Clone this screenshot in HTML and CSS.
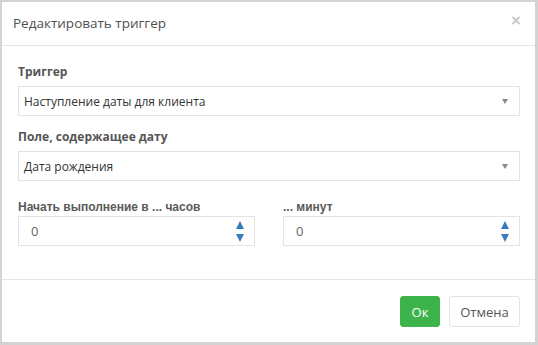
FILE: index.html
```html
<!DOCTYPE html>
<html>
<head>
<meta charset="utf-8">
<link rel="stylesheet" href="styles.css">
</head>
<body>
<div class="dialog">
  <div class="header">
    <span class="title">Редактировать триггер</span>
    <span class="close">×</span>
  </div>
  <div class="body">
    <div class="field">
      <div class="label">Триггер</div>
      <div class="select"><span>Наступление даты для клиента</span><span class="caret"></span></div>
    </div>
    <div class="field">
      <div class="label">Поле, содержащее дату</div>
      <div class="select"><span>Дата рождения</span><span class="caret"></span></div>
    </div>
    <div class="row">
      <div class="field col">
        <div class="label alt">Начать выполнение в ... часов</div>
        <div class="number"><span>0</span>
          <span class="spin"><span class="up"></span><span class="down"></span></span>
        </div>
      </div>
      <div class="field col">
        <div class="label alt">... минут</div>
        <div class="number"><span>0</span>
          <span class="spin"><span class="up"></span><span class="down"></span></span>
        </div>
      </div>
    </div>
  </div>
  <div class="footer">
    <button class="btn ok">Ок</button>
    <button class="btn cancel">Отмена</button>
  </div>
</div>
</body>
</html>
```

FILE: styles.css
```css
html, body {
  margin: 0;
  padding: 0;
}
body {
  background: #d3d3d3;
  width: 538px;
  height: 345px;
  padding: 2px 3px 3px 2px;
  box-sizing: border-box;
  font-family: "Open Sans", "Liberation Sans", sans-serif;
}
.dialog {
  background: #fff;
  height: 340px;
  display: flex;
  flex-direction: column;
}
.header {
  height: 43px;
  border-bottom: 1px solid #e5e5e5;
  display: flex;
  align-items: center;
  justify-content: space-between;
  padding: 0 14px 0 11px;
}
.title {
  font-size: 13.5px;
  color: #505050;
  margin-top: -2px;
}
.close {
  font-family: "Liberation Sans", sans-serif;
  font-size: 17px;
  font-weight: bold;
  color: #c8c8c8;
  margin-top: -6px;
}
.body {
  flex: 1;
  padding: 18px 15px 0 16px;
  border-bottom: 1px solid #e5e5e5;
}
.label {
  font-size: 12px;
  font-weight: bold;
  color: #555;
  height: 16px;
  line-height: 16px;
  margin-bottom: 6px;
}
.label.alt {
  font-family: "Liberation Sans", sans-serif;
  font-weight: bold;
  color: #5a5a5a;
  margin-bottom: 1px;
}
.select {
  height: 30px;
  border: 1px solid #e3e3e3;
  box-sizing: border-box;
  display: flex;
  align-items: center;
  justify-content: space-between;
  padding: 0 9px 0 5px;
  font-size: 12px;
  color: #333;
  margin-bottom: 13px;
}
.caret {
  width: 0;
  height: 0;
  border-left: 3.5px solid transparent;
  border-right: 3.5px solid transparent;
  border-top: 5px solid #888;
  margin-right: 2px;
}
.row {
  display: flex;
  gap: 28px;
  margin-top: 18px;
}
.col {
  flex: 1;
}
.number {
  height: 30px;
  border: 1px solid #e3e3e3;
  box-sizing: border-box;
  display: flex;
  align-items: center;
  justify-content: space-between;
  padding: 0 10px 0 12px;
  font-size: 13px;
  color: #666;
}
.spin {
  display: flex;
  flex-direction: column;
  gap: 5px;
}
.up {
  width: 0;
  height: 0;
  border-left: 4px solid transparent;
  border-right: 4px solid transparent;
  border-bottom: 8px solid #3a7bbf;
}
.down {
  width: 0;
  height: 0;
  border-left: 4px solid transparent;
  border-right: 4px solid transparent;
  border-top: 8px solid #3a7bbf;
}
.footer {
  height: 62px;
  display: flex;
  justify-content: flex-end;
  align-items: center;
  gap: 9px;
  padding: 1px 15px 0 16px;
  box-sizing: border-box;
}
.btn {
  height: 31px;
  font-family: "Open Sans", sans-serif;
  font-size: 13px;
  border-radius: 3px;
  cursor: pointer;
  padding: 0;
}
.ok {
  background: #3cb44b;
  color: #fff;
  border: 1px solid #3cb44b;
  width: 40px;
}
.cancel {
  background: #fff;
  color: #555;
  border: 1px solid #e3e3e3;
  width: 71px;
}
```
